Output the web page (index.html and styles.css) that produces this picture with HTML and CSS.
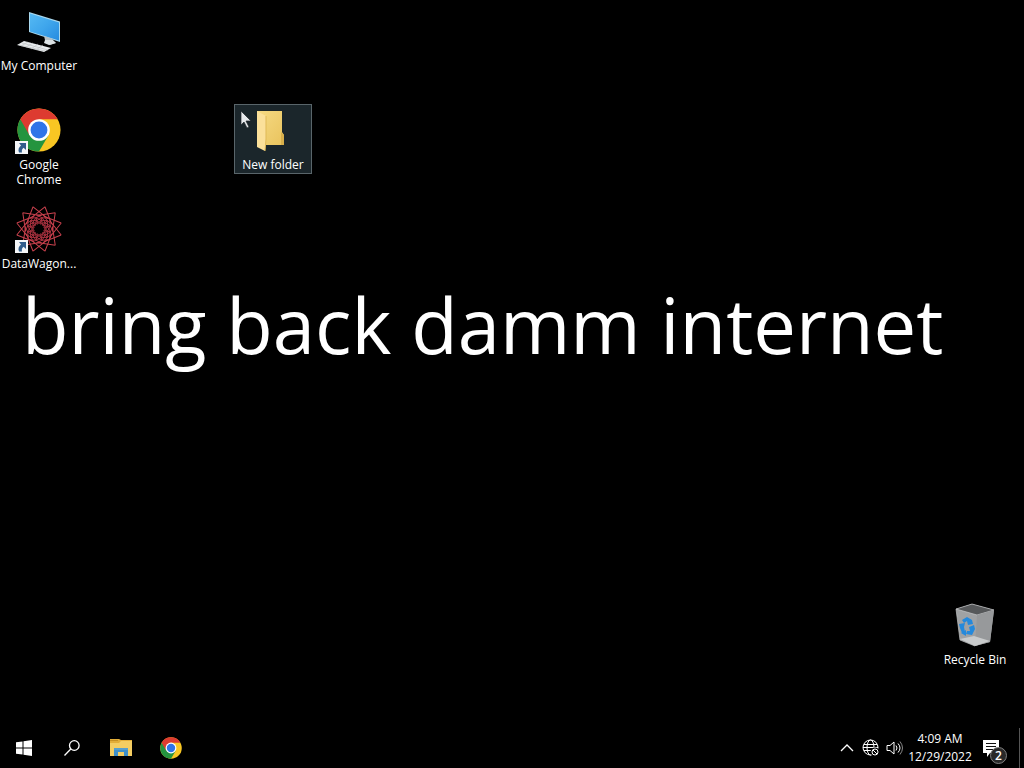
FILE: index.html
```html
<!DOCTYPE html>
<html lang="en">
<head>
<meta charset="utf-8">
<meta name="viewport" content="width=device-width, initial-scale=1">
<title>Desktop</title>
<link rel="stylesheet" href="styles.css">
</head>
<body>
<svg class="defs" aria-hidden="true">
  <defs>
    <symbol id="chrome" viewBox="0 0 48 48">
      <circle cx="24" cy="24" r="23.5" fill="#f9c623"/>
      <path d="M24 24 3.6 12.3A23.5 23.5 0 0 0 24 47.5L34.2 29.9Z" fill="#24943f"/>
      <path d="M3.6 12.3A23.5 23.5 0 0 1 44.4 12.3H24L13.8 29.9Z" fill="#dd3b30"/>
      <circle cx="24" cy="24" r="11.8" fill="#fff"/>
      <circle cx="24" cy="24" r="9.2" fill="#2f74e8"/>
    </symbol>
    <symbol id="shortcut" viewBox="0 0 13 13">
      <path d="M0 0h13v13H0z" fill="#f4f6f8"/>
      <path d="M4 2h7v7L8.600 6.800C7 8 6.500 9.300 7 11.500H4C2.800 8.500 3.800 6.200 6 4.400Z" fill="#315d8c"/>
    </symbol>
    <g id="petal" fill="none" stroke="#c8414d" stroke-width="1">
      <path d="M0-23 11-8M0-23-11-8"/>
      <path d="M0-15 6-10 3-5M0-15-6-10-3-5M0-12 4-8 0-5-4-8Z" stroke="#b03442" stroke-width=".8"/>
    </g>
  </defs>
</svg>
<main class="desktop">
  <h1 class="wallpaper">bring back damm internet</h1>

  <button class="item computer">
    <svg class="art" viewBox="0 0 48 48">
      <defs><linearGradient id="screen" x2="1" y2="1"><stop stop-color="#55b9f3"/><stop offset=".5" stop-color="#3fa6ec"/><stop offset="1" stop-color="#268be0"/></linearGradient></defs>
      <path d="M14 4 45 13.500V34L14 24Z" fill="#a9d8ee"/>
      <path d="M15 5.500 44 14.500V32.500L15 23.500Z" fill="url(#screen)"/>
      <path d="M29 28 38 31 37 33 41 35 35 37 30 34 30 32Z" fill="#b6c0c5"/>
      <path d="M30 32 38 32 41 35 34 37 29 35Z" fill="#dce2e4"/>
      <path d="M9 33 36 40 29 44 2 37Z" fill="#e9ecee"/>
      <path d="m7 35 26 7M4 37l26 6M13 34l-7 4m12-3-7 4m12-3-7 5m12-4-7 5" stroke="#b9bdc0" stroke-width=".6"/>
    </svg>
    <span>My Computer</span>
  </button>

  <button class="item browser">
    <svg class="art" viewBox="0 0 48 48"><use href="#chrome" x="2" y="1" width="44" height="44"/><use href="#shortcut" x="0" y="34" width="13" height="13"/></svg>
    <span>Google<br>Chrome</span>
  </button>

  <button class="item wagon">
    <svg class="art" viewBox="0 0 48 48">
      <g transform="translate(24 23)">
        <use href="#petal" transform="rotate(15)"/><use href="#petal" transform="rotate(45)"/><use href="#petal" transform="rotate(75)"/><use href="#petal" transform="rotate(105)"/><use href="#petal" transform="rotate(135)"/><use href="#petal" transform="rotate(165)"/><use href="#petal" transform="rotate(195)"/><use href="#petal" transform="rotate(225)"/><use href="#petal" transform="rotate(255)"/><use href="#petal" transform="rotate(285)"/><use href="#petal" transform="rotate(315)"/><use href="#petal" transform="rotate(345)"/>
      </g>
      <use href="#shortcut" x="0" y="34" width="13" height="13"/>
    </svg>
    <span>DataWagon...</span>
  </button>

  <button class="item folder">
    <svg class="art" viewBox="0 0 48 48">
      <defs><linearGradient id="paper" x2="1" y2="1"><stop stop-color="#f6da83"/><stop offset="1" stop-color="#e9c35d"/></linearGradient></defs>
      <path d="M8 4H33V25L35 28V38H12L8 36Z" fill="url(#paper)"/>
      <path d="M32 25 35 28V38H32Z" fill="#d8af4b"/>
      <path d="M8 4 17 9V32L16 44 8 40Z" fill="#fbe09a"/>
      <path d="M17 9V32L16 44" fill="none" stroke="#dfb957"/>
    </svg>
    <span>New folder</span>
  </button>

  <button class="item bin">
    <svg class="art" viewBox="0 0 48 48">
      <path d="M5 7 21 2 43 8 39 40 24 44 9 38Z" fill="#a0a2a4"/>
      <path d="M5 7 21 2 43 8 26 13Z" fill="#56585a" stroke="#c8cacb" stroke-width=".7"/>
      <path d="M26 13 43 8 39 40 24 44Z" fill="#97999b"/>
      <path d="m9 37 14-3 16 5-15 5Z" fill="#c9cbcc"/>
      <path d="M5 7 9 38 24 44" fill="none" stroke="#c0c3c4" stroke-width=".7"/>
      <g fill="#2489dc"><path d="m11 18 5-3 5 3 1 4-5 1-1-4-3 2Z"/><path d="m8 22 6-1-1 4 1 5-3 1-2-5Z"/><path d="m18 25 5-2 1 4-3 6-6-1 1-3h3Z"/><path d="m10 31 5-3v6Z"/></g>
    </svg>
    <span>Recycle Bin</span>
  </button>

  <svg class="pointer" viewBox="0 0 12 19" aria-hidden="true"><path d="M1 1v14l3-3 3 6 2-1-3-6h5Z" fill="#e8eaec" stroke="#20272b" stroke-width=".7"/></svg>
</main>

<footer class="taskbar">
  <nav class="apps" aria-label="Taskbar">
    <button class="app" aria-label="Start"><svg width="16" height="16" viewBox="0 0 16 16" fill="#fff"><path d="M0 2.300 6.500 1.400V7.500H0ZM7.500 1.200 16 0V7.500H7.500ZM0 8.500H6.500V14.600L0 13.700ZM7.500 8.500H16V16L7.500 14.800Z"/></svg></button>
    <button class="app" aria-label="Search"><svg width="16" height="16" viewBox="0 0 16 16" fill="none" stroke="#fff" stroke-width="1.300"><circle cx="10.300" cy="5.500" r="4.800"/><path d="M6.800 9 .5 15.500"/></svg></button>
    <button class="app" aria-label="File Explorer"><svg width="22" height="18" viewBox="0 0 22 18"><path d="M0 0h9l2 1h11v16H0z" fill="#e3ae39"/><path d="M0 4h9l2-2h11v15H0z" fill="#f4cd62"/><path d="M0 1h8v1H0z" fill="#c89123"/><path d="M4 9h14v8h-4v-4H8v4H4z" fill="#3e8fc9"/><path d="M4 9h14v2H4z" fill="#579fce"/></svg></button>
    <button class="app" aria-label="Google Chrome"><svg width="22" height="22"><use href="#chrome" width="22" height="22"/></svg></button>
  </nav>
  <div class="tray">
    <button class="status" aria-label="Show hidden icons"><svg width="14" height="8" viewBox="0 0 14 8" fill="none" stroke="#fff" stroke-width="1.300"><path d="m1 7 6-6 6 6"/></svg></button>
    <button class="status" aria-label="No internet"><svg width="18" height="18" viewBox="0 0 18 18" fill="none" stroke="#fff"><circle cx="8.500" cy="8.500" r="7.500"/><ellipse cx="8.500" cy="8.500" rx="3.500" ry="7.500"/><path d="M2 5.500h13M1 8.500h15M2 11.500h8"/><circle cx="13" cy="13" r="4.500" fill="#000" stroke="none"/><circle cx="13" cy="13" r="3"/><path d="m11 11 4 4"/></svg></button>
    <button class="status" aria-label="Volume"><svg width="18" height="16" viewBox="0 0 18 16" fill="none" stroke="#fff"><path d="M1 5.500h3L8 2v12l-4-3.500H1zM10 5.500q2 2.500 0 5M12 3.500q4 4.500 0 9"/><path d="M14 1.500q5 6.500 0 13" stroke="#888"/></svg></button>
    <button class="clock"><span>4:09 AM</span><span>12/29/2022</span></button>
    <button class="notices" aria-label="2 notifications">
      <svg width="16" height="17" viewBox="0 0 16 17"><path d="M0 0h16v13H7l-3 4v-4H0z" fill="#fff"/><path d="M3 3.500h10M3 6.500h10M3 9.500h7" stroke="#111"/></svg>
      <span class="badge">2</span>
    </button>
    <button class="peek" aria-label="Show desktop"></button>
  </div>
</footer>
</body>
</html>
```
FILE: styles.css
```css
* { box-sizing: border-box; }

body {
  display: flex;
  flex-direction: column;
  min-height: 100vh;
  margin: 0;
  background: #000;
  color: #fff;
  font-family: "Open Sans", "Noto Sans", sans-serif;
  font-size: 12px;
  overflow: hidden;
}

button {
  margin: 0;
  padding: 0;
  border: 0;
  background: transparent;
  color: inherit;
  font: inherit;
}

svg { display: block; }

.defs { position: absolute; width: 0; height: 0; }

.desktop { position: relative; flex: 1; }

.wallpaper {
  margin: 0;
  padding: 271px 0 0 22px;
  font-size: 76px;
  font-weight: 400;
  line-height: 108px;
  white-space: nowrap;
}

.item {
  position: absolute;
  display: flex;
  flex-direction: column;
  align-items: center;
  width: 78px;
  padding: 2px 0 1px;
  border: 1px solid transparent;
  line-height: 15px;
  white-space: nowrap;
}

.art { width: 48px; height: 48px; margin-bottom: 2px; }

.computer { left: 0; top: 5px; }
.browser { left: 0; top: 104px; }
.wagon { left: 0; top: 203px; }
.folder { left: 234px; top: 104px; background: #1b262b; border-color: #59656a; }
.bin { right: 10px; top: 599px; }

.pointer { position: absolute; left: 240px; top: 110px; width: 12px; height: 19px; }

.taskbar {
  display: flex;
  justify-content: space-between;
  height: 40px;
}

.apps, .tray { display: flex; align-items: stretch; }

.app { display: grid; place-items: center; width: 48px; }
.app:nth-child(n + 3) { width: 50px; }

.status { display: grid; place-items: center; width: 24px; }

.clock {
  display: flex;
  flex-direction: column;
  align-items: center;
  justify-content: center;
  width: 66px;
  line-height: 18px;
  white-space: nowrap;
}

.notices {
  position: relative;
  display: grid;
  place-items: center;
  width: 36px;
}

.badge {
  position: absolute;
  left: 17px;
  top: 19px;
  width: 17px;
  height: 17px;
  border: 1px solid #808080;
  border-radius: 50%;
  background: #292929;
  font-size: 12px;
  font-weight: 600;
  line-height: 15px;
}

.peek { width: 5px; margin-left: 10px; border-left: 1px solid #555; }
```
